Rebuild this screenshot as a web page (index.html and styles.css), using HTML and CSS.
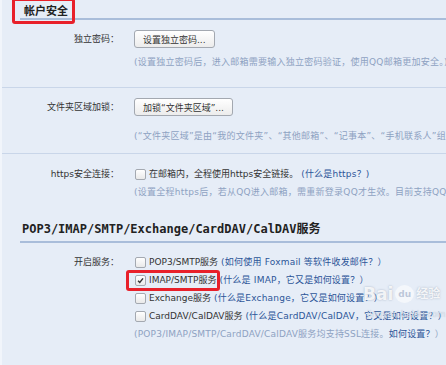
FILE: index.html
```html
<!DOCTYPE html>
<html lang="zh-CN">
<head>
    <meta charset="UTF-8">
    <title>帐户安全</title>
    <link rel="stylesheet" href="styles.css">
</head>
<body>
<div class="page">

    <div class="section-title">
        <span class="title-text marked">帐户安全</span>
    </div>

    <div class="row row-pwd">
        <div class="label">独立密码：</div>
        <div class="field">
            <button class="btn">设置独立密码...</button>
            <p class="hint">(设置独立密码后，进入邮箱需要输入独立密码验证，使用QQ邮箱更加安全。)</p>
        </div>
    </div>

    <div class="row row-lock">
        <div class="label">文件夹区域加锁：</div>
        <div class="field">
            <button class="btn">加锁“文件夹区域”...</button>
            <p class="hint">(“文件夹区域”是由“我的文件夹”、“其他邮箱”、“记事本”、“手机联系人”组成。若开启后，需验证独立密码才能访问。)</p>
        </div>
    </div>

    <div class="row row-https">
        <div class="label">https安全连接：</div>
        <div class="field">
            <div class="check-line"><span class="box"></span>在邮箱内，全程使用https安全链接。<a href="#">(什么是https？)</a></div>
            <p class="hint">(设置全程https后，若从QQ进入邮箱，需重新登录QQ才生效。目前支持QQ2013及以上版本。)</p>
        </div>
    </div>

    <div class="section-title section-pop">
        <span class="title-text mono">POP3/IMAP/SMTP/Exchange/CardDAV/CalDAV服务</span>
    </div>

    <div class="row row-services">
        <div class="label">开启服务：</div>
        <div class="field">
            <div class="check-line"><span class="box"></span>POP3/SMTP服务 <a href="#">(如何使用 Foxmail 等软件收发邮件？）</a></div>
            <div class="check-line"><span class="hl"><span class="box"><svg viewBox="0 0 10 10" width="10" height="10"><path d="M2.3 5.2 L4.2 7.2 L7.8 2.6" fill="none" stroke="#333" stroke-width="1.6"/></svg></span>IMAP/SMTP服务</span> <a href="#">(什么是 IMAP，它又是如何设置？）</a></div>
            <div class="check-line"><span class="box"></span>Exchange服务 <a href="#">(什么是Exchange，它又是如何设置？）</a></div>
            <div class="check-line"><span class="box"></span>CardDAV/CalDAV服务 <a href="#">(什么是CardDAV/CalDAV，它又是如何设置？）</a></div>
            <p class="hint">(POP3/IMAP/SMTP/CardDAV/CalDAV服务均支持SSL连接。<a href="#">如何设置？</a>）</p>
        </div>
    </div>

    <div class="watermark">
        <div class="wm-logo">Bai<span class="paw">du</span><span class="wm-cn">经验</span></div>
        <div class="wm-url">jingyan.baidu.com</div>
    </div>

</div>
</body>
</html>
```

FILE: styles.css
```css
body {
    margin: 0;
    padding: 0;
    background-color: #e6edf7;
    font-family: "DejaVu Sans", "Noto Sans CJK SC", sans-serif;
    font-size: 9px;
    color: #333;
    overflow: hidden;
}

.page {
    position: relative;
    width: 446px;
    height: 365px;
    border-left: 2px solid #f1f5fb;
    box-sizing: border-box;
    white-space: nowrap;
    overflow: hidden;
}

a {
    color: #2c5597;
    text-decoration: none;
}

.section-title {
    margin-left: 18px;
    padding-left: 2px;
    height: 18px;
    border-bottom: 2px solid #a9bdda;
}

.title-text {
    display: inline-block;
    font-family: "Noto Sans CJK SC", sans-serif;
    font-weight: bold;
    font-size: 11px;
    line-height: 20px;
    color: #222;
}

.marked {
    position: relative;
    padding: 0 2px;
}

.marked::after {
    content: "";
    position: absolute;
    left: -10px;
    right: -5px;
    top: -2px;
    bottom: -4px;
    border: 3px solid #e8202a;
    border-radius: 3px;
}

.mono {
    font-family: "DejaVu Sans Mono", "Noto Sans CJK SC", monospace;
    font-size: 12px;
    line-height: 18px;
}

.section-pop {
    margin-top: 21px;
    height: 21px;
}

.row {
    display: flex;
    border-bottom: 1px solid #c9d6e9;
}

.label {
    width: 117px;
    text-align: right;
    flex-shrink: 0;
    line-height: 18px;
}

.field {
    margin-left: 15px;
}

.btn {
    display: block;
    height: 18px;
    padding: 0 8px;
    font-family: "DejaVu Sans", "Noto Sans CJK SC", sans-serif;
    font-size: 9px;
    color: #333;
    background: linear-gradient(#ffffff, #ececec);
    border: 1px solid #a3a8b0;
    border-radius: 3px;
}

.hint {
    margin: 0;
    color: #8ea2c2;
    letter-spacing: 0.25px;
    line-height: 14px;
}

.hint a {
    color: #2c5597;
}

.row-pwd {
    padding: 10px 0 18px;
}

.row-pwd .hint {
    margin-top: 7px;
}

.row-lock {
    padding: 10px 0 10px;
}

.row-lock .hint {
    margin-top: 13px;
}

.row-https {
    border-bottom: none;
    padding-top: 11px;
}

.row-https .hint {
    margin-top: 2px;
}

.row-services {
    border-bottom: none;
    padding-top: 10px;
}

.row-services .hint {
    line-height: 18px;
    letter-spacing: 0.2px;
}

.check-line {
    line-height: 18px;
    display: flex;
    align-items: center;
}

.check-line a {
    margin-left: 3px;
    letter-spacing: 0.2px;
}

.box {
    display: inline-block;
    width: 9px;
    height: 9px;
    margin: 0 3px 0 1px;
    border: 1px solid #a4a9b1;
    border-radius: 2px;
    background: linear-gradient(#ffffff, #e9e9e9);
    position: relative;
}

.box svg {
    position: absolute;
    left: 0;
    top: 0;
    width: 9px;
    height: 9px;
}

.hl {
    position: relative;
    display: inline-flex;
    align-items: center;
}

.hl::after {
    content: "";
    position: absolute;
    left: -8px;
    right: -4px;
    top: -1px;
    bottom: -2px;
    border: 3px solid #e8202a;
    border-radius: 3px;
}

.watermark {
    position: absolute;
    left: 361px;
    top: 282px;
    color: rgba(255, 255, 255, 0.85);
    text-shadow: 0 0 2px rgba(110, 125, 150, 0.55);
}

.wm-logo {
    display: flex;
    align-items: center;
    font-family: "DejaVu Sans", "Noto Sans CJK SC", sans-serif;
    font-size: 17px;
    font-weight: bold;
    line-height: 24px;
}

.paw {
    display: inline-block;
    font-size: 9px;
    line-height: 18px;
    width: 19px;
    height: 18px;
    margin: 0 2px;
    text-align: center;
    border-radius: 50%;
    background: rgba(255, 255, 255, 0.55);
    color: rgba(185, 196, 215, 0.95);
    text-shadow: none;
}

.wm-cn {
    font-size: 12px;
    font-weight: bold;
}

.wm-url {
    font-family: "DejaVu Sans", sans-serif;
    font-size: 8.5px;
    line-height: 12px;
    padding: 2px 0 0 4px;
    color: rgba(225, 232, 242, 0.9);
    text-shadow: 0 0 1px rgba(110, 125, 150, 0.4);
}
```
